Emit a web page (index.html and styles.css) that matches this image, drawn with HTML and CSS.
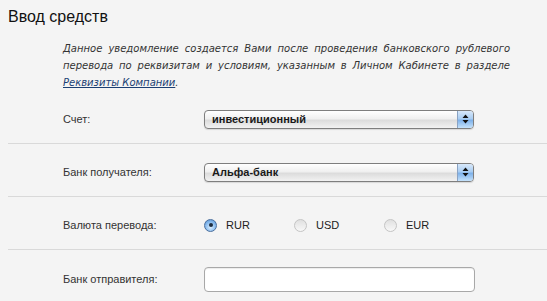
FILE: index.html
```html
<!DOCTYPE html>
<html lang="ru">
<head>
<meta charset="utf-8">
<title>Ввод средств</title>
<link rel="stylesheet" href="styles.css">
</head>
<body>
<div class="page">
  <h1 class="title">Ввод средств</h1>
  <p class="note">
    <span class="line">Данное уведомление создается Вами после проведения банковского рублевого</span>
    <span class="line">перевода по реквизитам и условиям, указанным в Личном Кабинете в разделе</span>
    <span class="line last"><a href="#" class="link">Реквизиты Компании</a>.</span>
  </p>
  <div class="row">
    <div class="label">Счет:</div>
    <div class="control">
      <div class="select">
        <span class="select-text">инвестиционный</span>
        <span class="select-arrow">
          <svg width="7" height="10" viewBox="0 0 7 10"><path d="M3.5 0.5 L6.5 4 L0.5 4 Z M0.5 6 L6.5 6 L3.5 9.5 Z" fill="#111"/></svg>
        </span>
      </div>
    </div>
  </div>
  <div class="row">
    <div class="label">Банк получателя:</div>
    <div class="control">
      <div class="select">
        <span class="select-text">Альфа-банк</span>
        <span class="select-arrow">
          <svg width="7" height="10" viewBox="0 0 7 10"><path d="M3.5 0.5 L6.5 4 L0.5 4 Z M0.5 6 L6.5 6 L3.5 9.5 Z" fill="#111"/></svg>
        </span>
      </div>
    </div>
  </div>
  <div class="row">
    <div class="label">Валюта перевода:</div>
    <div class="control radios">
      <label class="option"><span class="radio checked"><span class="dot"></span></span>RUR</label>
      <label class="option"><span class="radio"></span>USD</label>
      <label class="option"><span class="radio"></span>EUR</label>
    </div>
  </div>
  <div class="row last-row">
    <div class="label">Банк отправителя:</div>
    <div class="control">
      <div class="input"></div>
    </div>
  </div>
</div>
</body>
</html>
```
FILE: styles.css
```css
html, body {
  background: #f4f4f4;
}
body {
  margin: 8px 0 0 8px;
  font-family: "Liberation Sans", Arial, sans-serif;
  color: #333;
  overflow: hidden;
}
.title {
  margin: 0;
  font-size: 16px;
  font-weight: normal;
  line-height: 18px;
  color: #111;
}
.note {
  margin: 14px 0 0 55px;
  width: 447px;
  font-family: "DejaVu Sans", Verdana, sans-serif;
  font-style: italic;
  font-size: 10px;
  line-height: 17px;
  color: #333;
}
.line {
  display: block;
  text-align: justify;
  text-align-last: justify;
  white-space: nowrap;
}
.line.last {
  text-align-last: left;
}
.link {
  color: #1b3f73;
  text-decoration: underline;
}
.row {
  display: flex;
  align-items: center;
  padding: 4px 0 0 55px;
  box-sizing: border-box;
  height: 53px;
  border-bottom: 1px solid #d9d9d9;
  font-size: 11px;
}
.last-row {
  border-bottom: none;
}
.label {
  width: 141px;
  flex: none;
  color: #333;
}
.control {
  display: flex;
  align-items: center;
}
.select {
  display: flex;
  align-items: center;
  width: 270px;
  height: 19px;
  box-sizing: border-box;
  border: 1px solid #7e7e7e;
  border-radius: 4px;
  background: linear-gradient(#ffffff, #f0f0f0 45%, #dcdcdc 55%, #f2f2f2);
  box-shadow: 0 1px 1px rgba(0,0,0,0.12);
  overflow: hidden;
}
.select-text {
  flex: 1;
  padding-left: 7px;
  font-weight: bold;
  font-size: 11px;
  color: #1a1a1a;
}
.select-arrow {
  width: 15px;
  height: 100%;
  display: flex;
  align-items: center;
  justify-content: center;
  border-left: 1px solid #8aa3c4;
  background: linear-gradient(#d8e8fa, #a9cdf2 45%, #7fb2ea 55%, #c5e2fb);
}
.option {
  display: flex;
  align-items: center;
  width: 90px;
  font-size: 11px;
  color: #222;
}
.radio {
  width: 13px;
  height: 13px;
  box-sizing: border-box;
  border-radius: 50%;
  border: 1px solid #c4c4c4;
  background: linear-gradient(#e0e0e0, #f8f8f8);
  margin-right: 9px;
  display: flex;
  align-items: center;
  justify-content: center;
}
.radio.checked {
  border-color: #4a6f9e;
  background: radial-gradient(circle at 50% 65%, #dbeeff, #88bbee 55%, #4f8bd0);
}
.dot {
  width: 4px;
  height: 4px;
  border-radius: 50%;
  background: #1d2d40;
}
.input {
  width: 271px;
  height: 25px;
  box-sizing: border-box;
  border: 1px solid #a8a8a8;
  border-radius: 4px;
  background: #fff;
  box-shadow: inset 0 1px 1px rgba(0,0,0,0.08);
  margin-top: 2px;
}
```
